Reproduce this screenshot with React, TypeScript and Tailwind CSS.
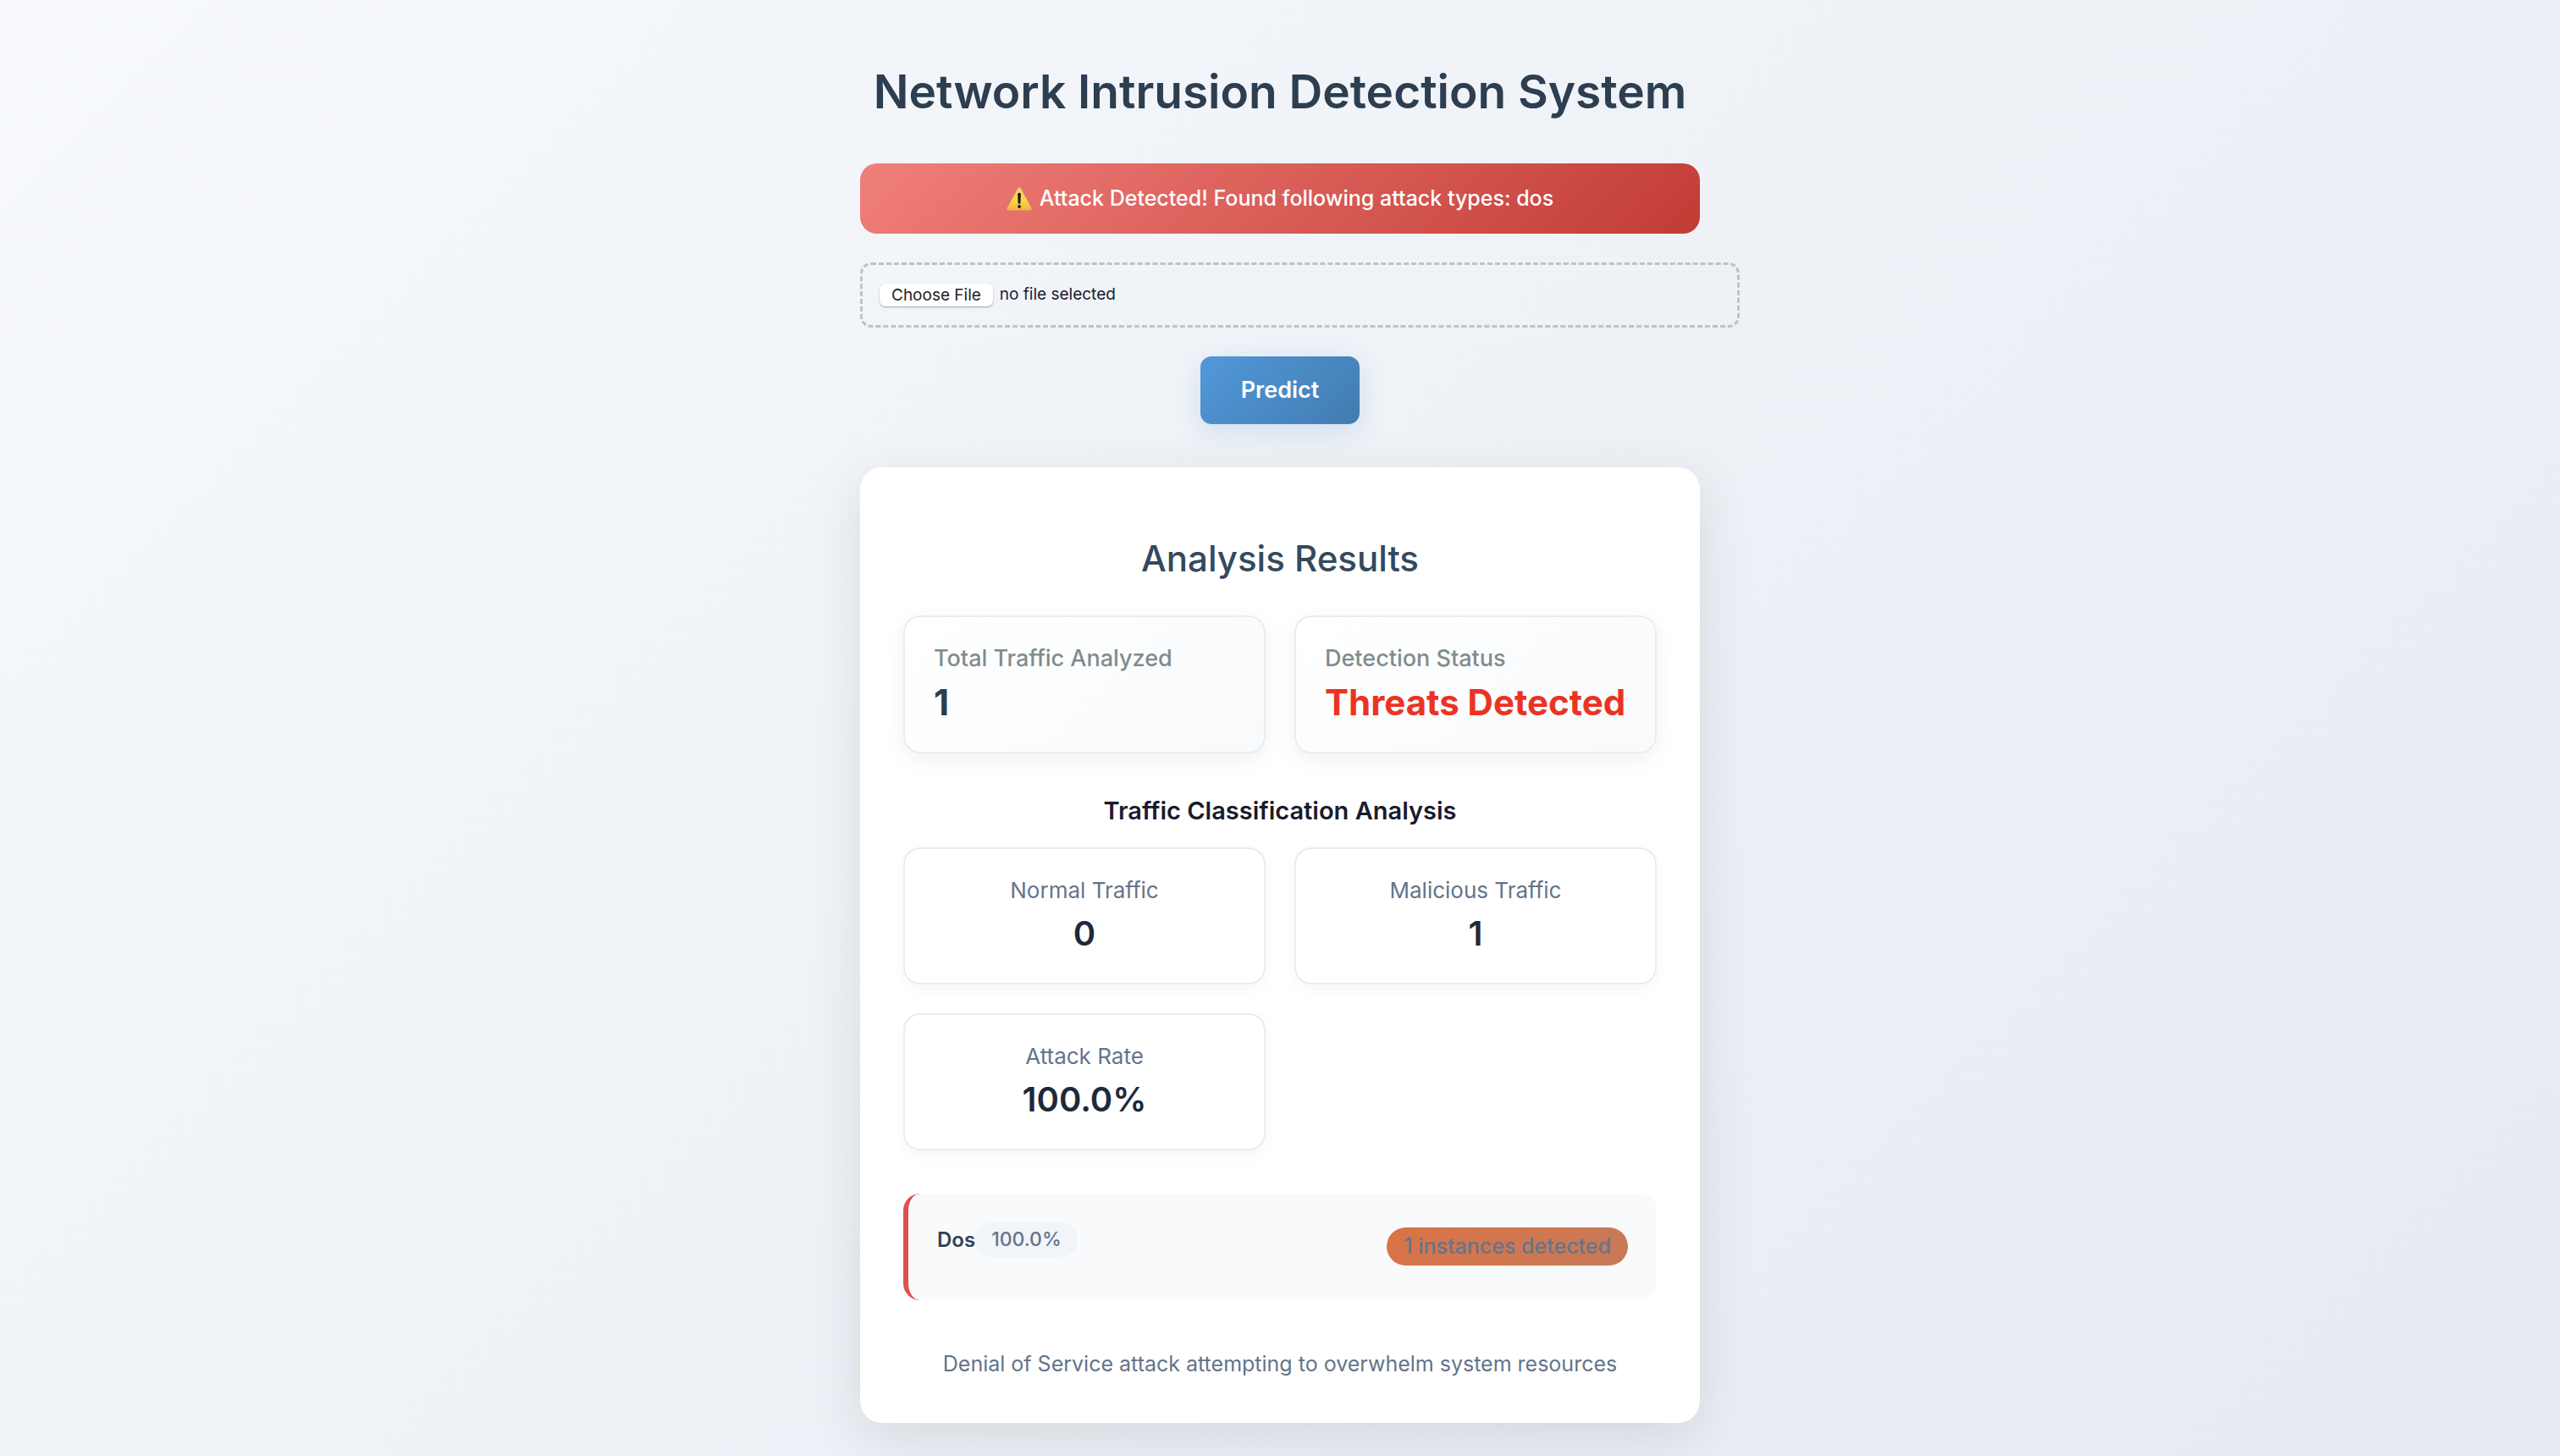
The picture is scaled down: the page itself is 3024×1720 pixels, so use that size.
import { useState } from "react";

function WarningIcon() {
  return (
    <svg viewBox="0 0 30 28" className="h-7 w-[30px] shrink-0" aria-hidden="true">
      <defs>
        <linearGradient id="warn" x1="0" y1="0" x2="0" y2="1">
          <stop offset="0" stopColor="#f6d264" />
          <stop offset="0.6" stopColor="#fbd544" />
          <stop offset="1" stopColor="#eeb04c" />
        </linearGradient>
      </defs>
      <path
        d="M13.4 1.4 Q15 -0.9 16.6 1.4 L29.5 24.8 Q30.3 27.4 28 27.5 L2 27.5 Q-0.3 27.4 0.5 24.8 Z"
        fill="url(#warn)"
      />
      <path
        d="M13.1 8.6 Q13.1 6.8 15 6.8 Q16.9 6.8 16.9 8.6 L16.4 18.4 Q16.3 19.8 15 19.8 Q13.7 19.8 13.6 18.4 Z"
        fill="#1d1a10"
      />
      <circle cx="15" cy="23" r="1.9" fill="#1d1a10" />
    </svg>
  );
}

function SummaryCard({ label, value, tone }: { label: string; value: string; tone: string }) {
  return (
    <div className="rounded-[20px] border-2 border-[#e8edf3] bg-linear-135 from-white to-[#f8fafc] p-[34px] shadow-[0_8px_26px_rgba(0,0,0,0.06)]">
      <p className="text-[27px] leading-[30px] font-medium text-[#7f8c8d]">{label}</p>
      <p className={`mt-[13px] text-[42px] leading-[48px] font-bold whitespace-nowrap ${tone}`}>{value}</p>
    </div>
  );
}

function MetricCard({ label, value }: { label: string; value: string }) {
  return (
    <div className="rounded-[20px] border-2 border-[#e8edf3] bg-white p-[34px] text-center shadow-[0_6px_18px_rgba(0,0,0,0.04)]">
      <p className="text-[26px] leading-[29px] text-[#64748b]">{label}</p>
      <p className="mt-[13px] text-[40px] leading-[48px] font-semibold text-[#1e293b]">{value}</p>
    </div>
  );
}

export default function App() {
  const [fileName, setFileName] = useState("no file selected");

  return (
    <div className="min-h-screen bg-linear-135 from-[#f7f9fc] via-[#eef1f6] to-[#e6eaf3] font-['Inter',sans-serif]">
      <main className="mx-auto max-w-[992px] pt-[72px] pb-[39px]">
        <h1 className="text-center text-[55px] leading-[72px] font-semibold whitespace-nowrap text-[#2c3e50]">
          Network Intrusion Detection System
        </h1>

        <div
          role="alert"
          className="mt-[49px] flex h-[83px] items-center justify-center gap-[9px] rounded-[20px] bg-linear-135 from-[#f07f7a] to-[#c23b35] text-[25px] font-medium text-white"
        >
          <WarningIcon />
          <span>Attack Detected! Found following attack types: dos</span>
        </div>

        <form onSubmit={(e) => e.preventDefault()}>
          <label className="mt-[34px] -mr-[47px] flex h-[77px] items-center gap-2 rounded-[13px] border-[3px] border-dashed border-[#bdc3c7] px-5 text-[19px]">
            <input
              type="file"
              className="sr-only"
              onChange={(e) => setFileName(e.target.files?.[0]?.name ?? "no file selected")}
            />
            <span className="rounded-[7px] bg-white px-[14px] leading-[27px] text-[#222222] shadow-[0_1px_2px_rgba(0,0,0,0.35)]">
              Choose File
            </span>
            <span className="text-[#1a1a2e]">{fileName}</span>
          </label>

          <button
            type="submit"
            className="mx-auto mt-[34px] block h-20 w-[188px] rounded-[13px] bg-linear-135 from-[#5298da] to-[#427cb0] text-[27px] font-semibold text-white shadow-[0_8px_30px_rgba(74,144,226,0.2)]"
          >
            Predict
          </button>
        </form>

        <section className="mt-[51px] rounded-[26px] bg-white px-[51px] pt-[77px] pb-[49px] shadow-[0_16px_64px_rgba(0,0,0,0.1)]">
          <h2 className="text-center text-[42px] leading-[62px] font-medium text-[#34495e]">Analysis Results</h2>

          <div className="mt-9 grid grid-cols-2 gap-[34px]">
            <SummaryCard label="Total Traffic Analyzed" value="1" tone="text-[#2c3e50]" />
            <SummaryCard label="Detection Status" value="Threats Detected" tone="text-[#eb3323]" />
          </div>

          <h3 className="mt-[51px] text-center text-[29px] leading-[34px] font-semibold text-[#1a1a2e]">
            Traffic Classification Analysis
          </h3>

          <div className="mt-[26px] grid grid-cols-2 gap-[34px]">
            <MetricCard label="Normal Traffic" value="0" />
            <MetricCard label="Malicious Traffic" value="1" />
            <MetricCard label="Attack Rate" value="100.0%" />
          </div>

          <div className="mt-[51px] flex items-start justify-between rounded-[20px] border-l-[6px] border-[#de524c] bg-[#f8fafc] pt-[34px] pr-[34px] pb-[41px] pl-[34px] text-[25px]">
            <div className="flex items-center">
              <span className="text-[24px] font-semibold text-[#334155]">Dos</span>
              <span className="rounded-[20px] bg-[#f1f5f9] px-[19px] text-[23px] leading-[41px] font-medium text-[#64748b]">
                100.0%
              </span>
            </div>
            <span className="mt-1.5 rounded-full bg-linear-135 from-[#da7346] to-[#c77a58] px-5 leading-[45px] font-medium text-[#64748b]">
              1 instances detected
            </span>
          </div>

          <p className="mt-[55px] text-center text-[25px] leading-[41px] text-[#64748b]">
            Denial of Service attack attempting to overwhelm system resources
          </p>
        </section>
      </main>
    </div>
  );
}
